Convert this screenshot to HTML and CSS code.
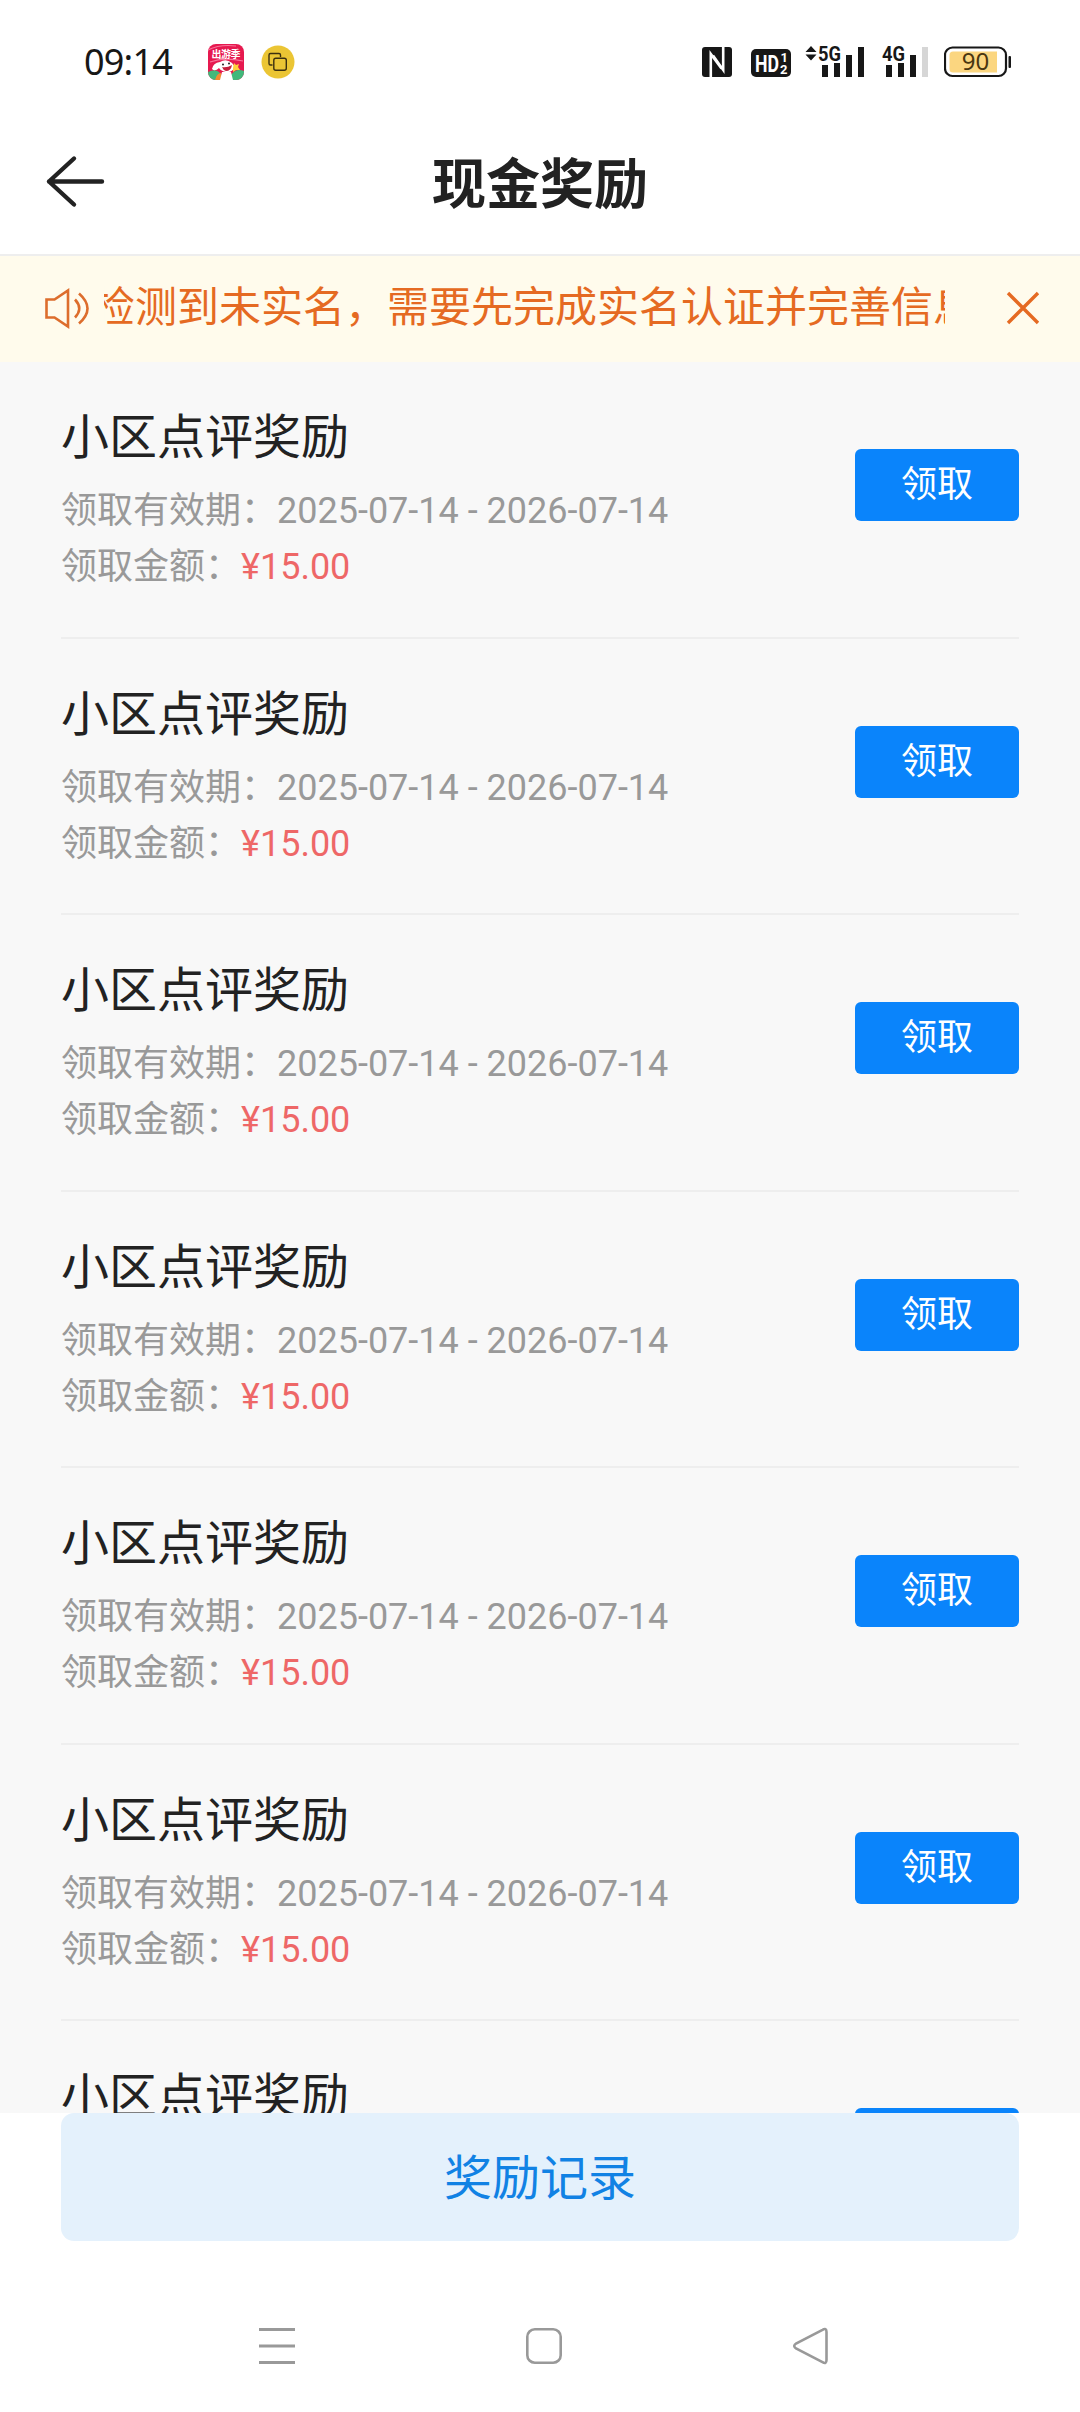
FILE: index.html
```
<!DOCTYPE html>
<html lang="zh-CN">
<head>
  <meta charset="UTF-8" />
  <meta name="viewport" content="width=device-width, initial-scale=1.0"/>
  <title>现金奖励</title>
  <link rel="stylesheet" href="styles.css">
</head>
<body>
  <div class="page">
    <div class="status-bar">
      <span class="time">09:14</span>
      <svg class="app-icon" width="36" height="36" viewBox="0 0 36 36">
        <defs><clipPath id="appClip"><rect width="36" height="36" rx="8"/></clipPath></defs>
        <g clip-path="url(#appClip)">
          <rect width="36" height="36" fill="#e6194f"/>
          <path d="M0 6Q12 0 28 2M2 18Q16 13 35 17" stroke="#f8759c" stroke-width="1.2" fill="none"/>
          <path d="M0 28Q8 24 12 29L15 36H0ZM36 27Q28 24 23 31L21 36H36Z" fill="#41b87b"/>
          <path d="M7 36Q9 29 13 29L14 36Z" fill="#f28a30"/>
          <text class="app-text" x="3.5" y="14" textLength="29">出游季</text>
          <path d="M12 18Q18 14 24 19L27 23Q24 29 18 28Q13 27 11 24Q7 28 4 25Q5 19 12 18ZM14 28H23L25 36H12Z" fill="#fff"/>
          <path d="M14 23Q19 24 24 21Q23 27 18 27Q15 26 14 23Z" fill="#c5203d"/>
          <circle cx="15" cy="20.5" r="1" fill="#222"/><circle cx="21" cy="19.5" r="1" fill="#222"/>
          <path d="M26 19L28 21L31 20L30 23L32 26L28 26L25 28L25 24Z" fill="#ffcf3c"/>
        </g>
      </svg>
      <svg class="copy-icon" width="34" height="34" viewBox="0 0 34 34">
        <circle cx="17" cy="17" r="16.5" fill="#ebc534"/>
        <path d="M11.5 20H9.5Q8 20 8 18.5V10Q8 8.5 9.5 8.5H18Q19.5 8.5 19.5 10V12" fill="none" stroke="#3c3010" stroke-width="1.4"/>
        <rect x="12.8" y="13.3" width="12.5" height="12" rx="2" fill="none" stroke="#3c3010" stroke-width="1.4"/>
      </svg>
      <div class="status-right">
        <svg width="30" height="30" viewBox="0 0 30 30">
          <rect width="30" height="30" rx="3" fill="#171717"/>
          <path d="M8.8 30V7L19.500 21.500M21.200 0V23L11 8.500" fill="none" stroke="#fff" stroke-width="2.600"/>
        </svg>
        <svg class="hd-icon" width="40" height="28" viewBox="0 0 40 28">
          <rect width="40" height="28" rx="5" fill="#171717"/>
          <text class="hd-text" x="4" y="22.500" textLength="24" lengthAdjust="spacingAndGlyphs">HD</text>
          <text class="hd-num" x="29.5" y="13">1</text>
          <text class="hd-num" x="29" y="24.5">2</text>
        </svg>
        <svg class="signal-5g" width="61" height="34" viewBox="0 0 61 34">
          <path d="M0.500 8L6 2L11.500 8ZM0.500 10.500L6 16.500L11.500 10.500Z" fill="#171717"/>
          <text class="net-text" x="13" y="17" textLength="23" lengthAdjust="spacingAndGlyphs">5G</text>
          <path d="M17 21h6v12h-6zM29 19h6v14h-6zM41 11h6v22h-6zM53 3h6v30h-6z" fill="#171717"/>
        </svg>
        <svg class="signal-4g" width="47" height="34" viewBox="0 0 47 34">
          <text class="net-text" x="0" y="17" textLength="23" lengthAdjust="spacingAndGlyphs">4G</text>
          <path d="M4 21h6v12h-6zM16 19h6v14h-6zM28 11h6v22h-6z" fill="#171717"/>
          <path d="M40 3h6v30h-6z" fill="#d6d6d6"/>
        </svg>
        <svg class="battery" width="68" height="32" viewBox="0 0 68 32">
          <rect x="1" y="1.5" width="61" height="28.5" rx="7.5" fill="#fff" stroke="#171717" stroke-width="2.2"/>
          <path d="M9 5.5H53V26.5H9Q5.5 26.5 5.5 23V9Q5.5 5.5 9 5.5Z" fill="#fbd680"/>
          <rect x="64.5" y="10" width="2.5" height="12" rx="1" fill="#171717"/>
          <text class="battery-text" x="31.5" y="24" text-anchor="middle">90</text>
        </svg>
      </div>
    </div>

    <div class="nav-header">
      <svg class="back" width="64" height="54" viewBox="0 0 64 54">
        <path d="M33 4.500L8 27.500L33 50.500M8 27.500H61" fill="none" stroke="#222" stroke-width="4.400" stroke-linecap="round" stroke-linejoin="round"/>
      </svg>
      <h1 class="nav-title">现金奖励</h1>
    </div>

    <div class="notice-bar">
      <svg class="speaker" width="50" height="44" viewBox="0 0 50 44">
        <path d="M4.500 13.500H12.500L26 4.500V40.500L12.500 31.500H4.500Z" fill="none" stroke="#dd6d2c" stroke-width="2.600"/>
        <path d="M33 13.500Q41.500 22.500 33 31.500M37 7.500Q54 22.500 37 37.500" fill="none" stroke="#dd6d2c" stroke-width="2.600"/>
      </svg>
      <div class="notice-wrap"><span class="notice-text">检测到未实名，需要先完成实名认证并完善信息</span></div>
      <svg class="close" width="34" height="34" viewBox="0 0 34 34">
        <path d="M2 2L32 32M32 2L2 32" fill="none" stroke="#e56a22" stroke-width="3.400"/>
      </svg>
    </div>

    <div class="reward-list">
      <div class="reward-item">
        <div class="reward-info">
          <h2 class="reward-title">小区点评奖励</h2>
          <p class="reward-line">领取有效期：2025-07-14 - 2026-07-14</p>
          <p class="reward-line">领取金额：<span class="amount">¥15.00</span></p>
        </div>
        <button class="receive-button">领取</button>
      </div>
      <div class="reward-item">
        <div class="reward-info">
          <h2 class="reward-title">小区点评奖励</h2>
          <p class="reward-line">领取有效期：2025-07-14 - 2026-07-14</p>
          <p class="reward-line">领取金额：<span class="amount">¥15.00</span></p>
        </div>
        <button class="receive-button">领取</button>
      </div>
      <div class="reward-item">
        <div class="reward-info">
          <h2 class="reward-title">小区点评奖励</h2>
          <p class="reward-line">领取有效期：2025-07-14 - 2026-07-14</p>
          <p class="reward-line">领取金额：<span class="amount">¥15.00</span></p>
        </div>
        <button class="receive-button">领取</button>
      </div>
      <div class="reward-item">
        <div class="reward-info">
          <h2 class="reward-title">小区点评奖励</h2>
          <p class="reward-line">领取有效期：2025-07-14 - 2026-07-14</p>
          <p class="reward-line">领取金额：<span class="amount">¥15.00</span></p>
        </div>
        <button class="receive-button">领取</button>
      </div>
      <div class="reward-item">
        <div class="reward-info">
          <h2 class="reward-title">小区点评奖励</h2>
          <p class="reward-line">领取有效期：2025-07-14 - 2026-07-14</p>
          <p class="reward-line">领取金额：<span class="amount">¥15.00</span></p>
        </div>
        <button class="receive-button">领取</button>
      </div>
      <div class="reward-item">
        <div class="reward-info">
          <h2 class="reward-title">小区点评奖励</h2>
          <p class="reward-line">领取有效期：2025-07-14 - 2026-07-14</p>
          <p class="reward-line">领取金额：<span class="amount">¥15.00</span></p>
        </div>
        <button class="receive-button">领取</button>
      </div>
      <div class="reward-item">
        <div class="reward-info">
          <h2 class="reward-title">小区点评奖励</h2>
        </div>
        <button class="receive-button"></button>
      </div>
    </div>

    <div class="footer">
      <button class="record-button">奖励记录</button>
    </div>

    <div class="system-nav">
      <svg width="36" height="38" viewBox="0 0 36 38">
        <path d="M0 2.5H36M0 19H36M0 35.5H36" stroke="#999" stroke-width="3"/>
      </svg>
      <svg width="36" height="38" viewBox="0 0 36 38">
        <rect x="1.3" y="2.3" width="33.4" height="33.4" rx="7.5" fill="none" stroke="#999" stroke-width="2.6"/>
      </svg>
      <svg width="36" height="38" viewBox="0 0 36 38">
        <path d="M29.5 2.8Q33.5 0.5 33.5 5V33Q33.5 37.5 29.5 35.2L3 21.5Q-0.5 19 3 16.5Z" fill="none" stroke="#999" stroke-width="2.6"/>
      </svg>
    </div>
  </div>
</body>
</html>
```
FILE: styles.css
```
* {
  box-sizing: border-box;
}
body {
  margin: 0;
  background-color: #fff;
  font-family: Roboto, "Noto Sans CJK SC", sans-serif;
}
h1, h2, p {
  margin: 0;
  font-weight: normal;
}
svg {
  display: block;
  flex-shrink: 0;
}
button {
  border: none;
  padding: 0;
  font-family: inherit;
}
.page {
  width: 1080px;
  height: 2412px;
  display: flex;
  flex-direction: column;
  overflow: hidden;
}

/* status bar */
.status-bar {
  height: 110px;
  padding: 14px 68px 0 84px;
  display: flex;
  align-items: center;
  flex-shrink: 0;
}
.time {
  width: 124px;
  font-family: "Noto Sans", sans-serif;
  font-size: 36px;
  line-height: 40px;
  letter-spacing: -0.8px;
  color: #171717;
}
.copy-icon {
  margin-left: 17px;
}
.status-right {
  display: flex;
  align-items: center;
  margin-left: auto;
}
.hd-icon {
  margin: 2px 0 0 19px;
}
.signal-5g {
  margin: -2px 0 0 14px;
}
.signal-4g {
  margin: -2px 0 0 16px;
}
.signal-5g, .signal-4g {
  overflow: visible;
}
.battery {
  margin-left: 15px;
}
.app-text {
  font-size: 10px;
  font-weight: bold;
  fill: #fff;
}
.hd-text {
  font-size: 23px;
  font-weight: bold;
  fill: #fff;
}
.hd-num {
  font-size: 13px;
  font-weight: bold;
  fill: #fff;
}
.net-text {
  font-size: 21px;
  font-weight: bold;
  fill: #171717;
}
.battery-text {
  font-family: "Noto Sans", sans-serif;
  font-size: 24px;
  fill: #4a3710;
}

/* header */
.nav-header {
  height: 146px;
  display: flex;
  align-items: center;
  flex-shrink: 0;
  border-bottom: 2px solid #eee;
}
.back {
  margin: -2px 0 0 41px;
}
.nav-title {
  width: 870px;
  padding-top: 7px;
  text-align: center;
  font-size: 54px;
  line-height: 80px;
  font-weight: bold;
  color: #222;
}

/* notice */
.notice-bar {
  height: 106px;
  padding: 0 40px 2px 42px;
  display: flex;
  align-items: center;
  flex-shrink: 0;
  background-color: #fffbec;
}
.notice-wrap {
  width: 841px;
  margin-left: 12px;
  overflow: hidden;
  white-space: nowrap;
}
.notice-text {
  margin-left: -11px;
  font-size: 42px;
  line-height: 64px;
  color: #e56a22;
}
.close {
  margin-left: auto;
}

/* list */
.reward-list {
  height: 1751px;
  padding: 0 61px;
  flex-shrink: 0;
  overflow: hidden;
  background-color: #f8f8f8;
}
.reward-item {
  height: 276.5px;
  display: flex;
  justify-content: space-between;
  border-bottom: 2px solid #eee;
}
.reward-title {
  margin-top: 41px;
  font-size: 48px;
  line-height: 70px;
  color: #222;
}
.reward-line {
  font-size: 36px;
  line-height: 56px;
  color: #999;
}
.reward-title + .reward-line {
  margin-top: 10px;
}
.amount {
  color: #ee6767;
}
.receive-button {
  width: 164px;
  height: 72px;
  margin-top: 87px;
  border-radius: 6px;
  background-color: #0a84fb;
  color: #fff;
  font-size: 36px;
  line-height: 70px;
}

/* bottom */
.footer {
  height: 128px;
  padding: 0 61px;
  flex-shrink: 0;
}
.record-button {
  width: 958px;
  height: 128px;
  padding-bottom: 7px;
  border-radius: 13px;
  background-color: #e4f1fc;
  color: #1182e4;
  font-size: 48px;
}
.system-nav {
  padding: 86px 251px 0 259px;
  display: flex;
  justify-content: space-between;
}
```
